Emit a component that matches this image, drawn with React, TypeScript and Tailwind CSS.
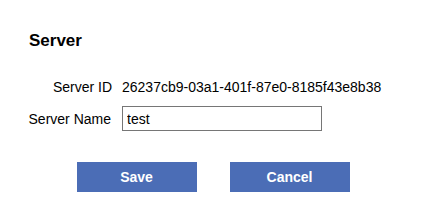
import React from "react";

export default function App() {
  return (
    <div className="w-[426px] h-[216px] bg-white text-black font-['Liberation_Sans',Arial,sans-serif] overflow-hidden">
      <h2 className="text-[17px] font-bold leading-[20px] pl-[29px] pt-[31px]">Server</h2>
      <div className="grid grid-cols-[112px_auto] gap-x-[10px] gap-y-[11px] items-center mt-[28px] text-[14px] leading-[16px]">
        <div className="text-right">Server ID</div>
        <div>26237cb9-03a1-401f-87e0-8185f43e8b38</div>
        <div className="text-right pr-[1px]">Server Name</div>
        <div>
          <input
            type="text"
            defaultValue="test"
            className="block w-[200px] h-[25px] border border-[#767676] px-[4px] text-[14px] leading-[16px] outline-none font-['Liberation_Sans',Arial,sans-serif]"
          />
        </div>
      </div>
      <div className="flex justify-center gap-[33px] mt-[31px]">
        <button className="w-[120px] h-[30px] bg-[#4b6db6] text-white font-bold text-[14px]">Save</button>
        <button className="w-[120px] h-[30px] bg-[#4b6db6] text-white font-bold text-[14px]">Cancel</button>
      </div>
    </div>
  );
}
